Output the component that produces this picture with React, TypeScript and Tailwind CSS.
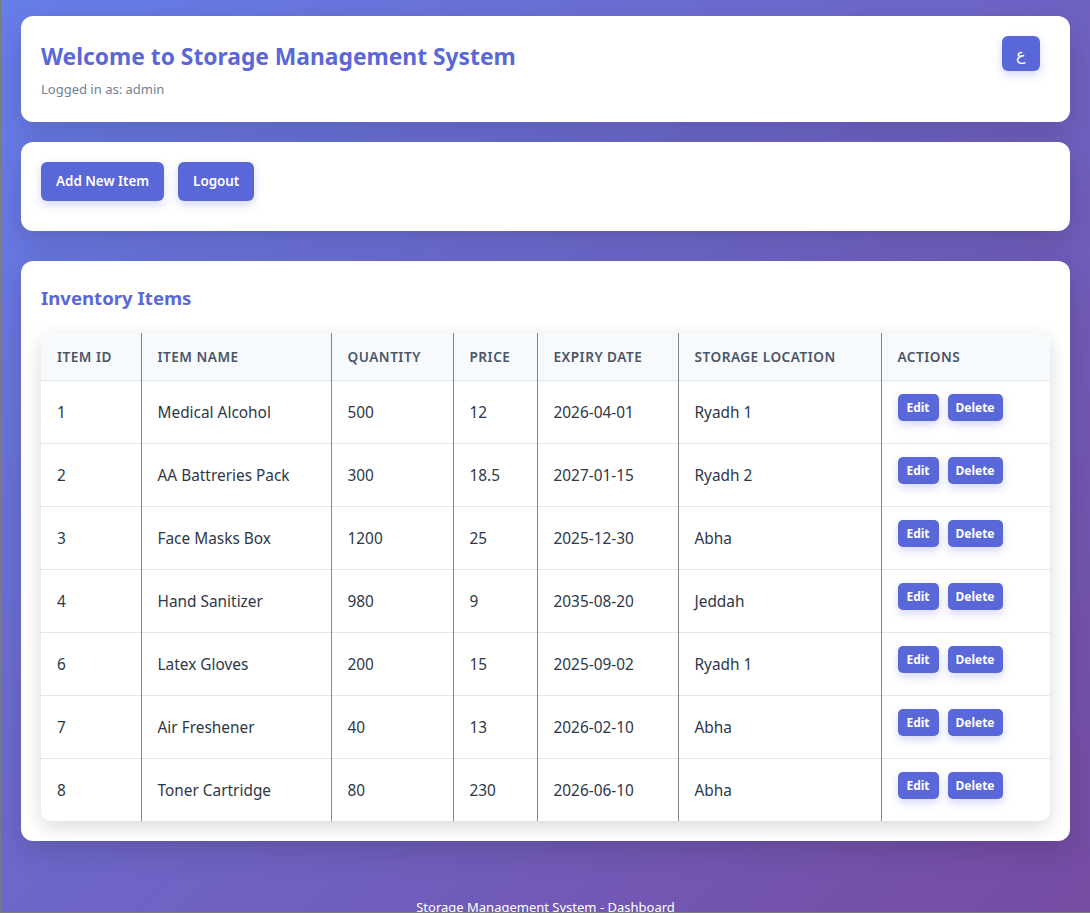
import React from 'react';

type Item = {
  id: number;
  name: string;
  quantity: number;
  price: number;
  expiry: string;
  location: string;
};

const items: Item[] = [
  { id: 1, name: 'Medical Alcohol', quantity: 500, price: 12, expiry: '2026-04-01', location: 'Ryadh 1' },
  { id: 2, name: 'AA Battreries Pack', quantity: 300, price: 18.5, expiry: '2027-01-15', location: 'Ryadh 2' },
  { id: 3, name: 'Face Masks Box', quantity: 1200, price: 25, expiry: '2025-12-30', location: 'Abha' },
  { id: 4, name: 'Hand Sanitizer', quantity: 980, price: 9, expiry: '2035-08-20', location: 'Jeddah' },
  { id: 6, name: 'Latex Gloves', quantity: 200, price: 15, expiry: '2025-09-02', location: 'Ryadh 1' },
  { id: 7, name: 'Air Freshener', quantity: 40, price: 13, expiry: '2026-02-10', location: 'Abha' },
  { id: 8, name: 'Toner Cartridge', quantity: 80, price: 230, expiry: '2026-06-10', location: 'Abha' },
];

const columns = [
  { label: 'Item ID', width: 'w-[100px]' },
  { label: 'Item Name', width: 'w-[190px]' },
  { label: 'Quantity', width: 'w-[122px]' },
  { label: 'Price', width: 'w-[84px]' },
  { label: 'Expiry Date', width: 'w-[141px]' },
  { label: 'Storage Location', width: 'w-[203px]' },
  { label: 'Actions', width: 'w-[169px]' },
];

const cellBorder = 'border-r border-[#858585] last:border-r-0';

export default function App() {
  return (
    <div
      className="h-screen overflow-hidden border-l border-b border-[#7b7b7b] bg-[linear-gradient(135deg,#667eea_0%,#764ba2_100%)] px-5 pt-4 text-[#2d3748]"
      style={{ fontFamily: '"Noto Sans", "Open Sans", sans-serif' }}
    >
      <header className="flex items-start justify-between rounded-xl bg-white pl-5 pr-[30px] pt-5 pb-6 shadow-[0_10px_30px_rgba(0,0,0,0.15)]">
        <div>
          <h1 className="mt-[4px] text-[22.8px] font-bold leading-[34px] text-[#5a67d8]">
            Welcome to Storage Management System
          </h1>
          <p className="mt-[6px] text-[13px] leading-[18px] text-[#718096]">Logged in as: admin</p>
        </div>
        <button className="flex h-[35px] w-[38px] items-center justify-center rounded-md bg-[#5a67d8] text-[16px] text-white shadow-[0_4px_10px_rgba(90,103,216,0.25)]">
          ع
        </button>
      </header>

      <div className="mt-5 flex gap-[14px] rounded-xl bg-white px-5 pt-5 pb-[30px] shadow-[0_10px_30px_rgba(0,0,0,0.15)]">
        <button className="h-[39px] rounded-md bg-[#5a67d8] px-[15px] text-[13.4px] font-semibold text-white shadow-[0_4px_10px_rgba(90,103,216,0.25)]">
          Add New Item
        </button>
        <button className="h-[39px] rounded-md bg-[#5a67d8] px-[15px] text-[13.4px] font-semibold text-white shadow-[0_4px_10px_rgba(90,103,216,0.25)]">
          Logout
        </button>
      </div>

      <section className="mt-[30px] rounded-xl bg-white p-5 shadow-[0_10px_30px_rgba(0,0,0,0.15)]">
        <h2 className="mt-[3px] text-[18.6px] font-bold leading-[28px] text-[#5a67d8]">Inventory Items</h2>
        <div className="mt-[21px] overflow-hidden rounded-[10px] shadow-[0_6px_20px_rgba(0,0,0,0.15)]">
          <table className="w-full table-fixed border-collapse text-left">
            <thead>
              <tr className="h-[47px] border-b border-[#e2e8f0] bg-[#f7fafc]">
                {columns.map((c) => (
                  <th
                    key={c.label}
                    className={`${c.width} ${cellBorder} px-4 pt-[2px] text-[13.6px] font-semibold uppercase tracking-[0.5px] text-[#4a5568]`}
                  >
                    {c.label}
                  </th>
                ))}
              </tr>
            </thead>
            <tbody>
              {items.map((item) => (
                <tr key={item.id} className="h-[63px] border-b border-[#e2e8f0] last:border-b-0 text-[15.4px]">
                  <td className={`${cellBorder} px-4 pt-[2px]`}>{item.id}</td>
                  <td className={`${cellBorder} px-4 pt-[2px]`}>{item.name}</td>
                  <td className={`${cellBorder} px-4 pt-[2px]`}>{item.quantity}</td>
                  <td className={`${cellBorder} px-4 pt-[2px]`}>{item.price}</td>
                  <td className={`${cellBorder} px-4 pt-[2px]`}>{item.expiry}</td>
                  <td className={`${cellBorder} px-4 pt-[2px]`}>{item.location}</td>
                  <td className={`${cellBorder} px-4`}>
                    <div className="mb-2 flex gap-[9px]">
                      <button className="h-[27px] w-[41px] rounded-[5px] bg-[#5a67d8] text-[12px] font-bold text-white shadow-[0_4px_8px_rgba(90,103,216,0.25)]">
                        Edit
                      </button>
                      <button className="h-[27px] w-[55px] rounded-[5px] bg-[#5a67d8] text-[12px] font-bold text-white shadow-[0_4px_8px_rgba(90,103,216,0.25)]">
                        Delete
                      </button>
                    </div>
                  </td>
                </tr>
              ))}
            </tbody>
          </table>
        </div>
      </section>

      <footer className="mt-[57px] text-center text-[13px] text-white">
        Storage Management System - Dashboard
      </footer>
    </div>
  );
}
